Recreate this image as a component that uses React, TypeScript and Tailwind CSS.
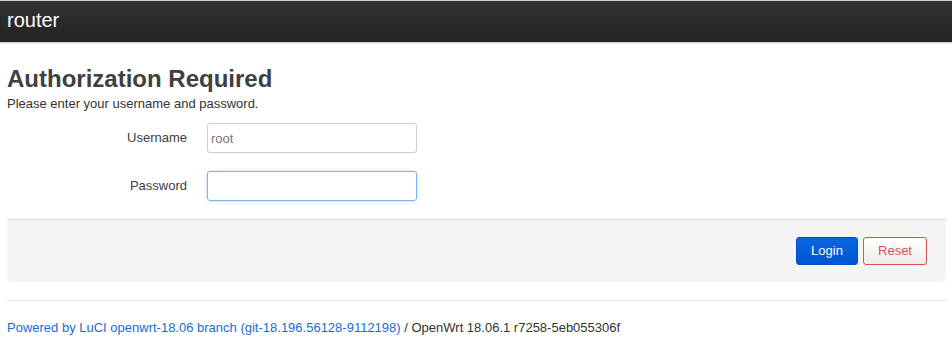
export default function App() {
  return (
    <div className="min-h-[360px] bg-white font-['Liberation_Sans',Arial,sans-serif] text-[#404040]">
      <header className="h-[42px] border-t border-[#d0d0d0] bg-gradient-to-b from-[#333333] to-[#222222] pl-[7px] shadow-[0_1px_2px_rgba(0,0,0,0.25)]">
        <div className="pt-[7px] text-[20px] leading-[24px] text-white">router</div>
      </header>

      <main className="px-[7px] pr-[6px]">
        <h2 className="mt-[22px] text-[24px] font-bold leading-[30px] text-[#404040]">Authorization Required</h2>
        <p className="mt-[1px] text-[13px] leading-[17px] text-[#333]">Please enter your username and password.</p>

        <div className="mt-[11px] space-y-[18px]">
          <div className="flex items-center">
            <label className="w-[180px] text-right text-[13px] text-[#404040]">Username</label>
            <input
              type="text"
              defaultValue="root"
              className="ml-[20px] h-[30px] w-[210px] rounded-[3px] border border-[#ccc] px-[3px] text-[13px] text-[#777] outline-none"
            />
          </div>
          <div className="flex items-center">
            <label className="w-[180px] text-right text-[13px] text-[#404040]">Password</label>
            <input
              type="password"
              className="ml-[20px] h-[30px] w-[210px] rounded-[3px] border border-[#7cb8f0] px-[3px] text-[13px] shadow-[0_0_3px_rgba(82,168,236,0.5)] outline-none"
            />
          </div>
        </div>

        <div className="mt-[18px] flex h-[63px] items-center justify-end rounded-b-[4px] border-t border-[#ddd] bg-[#f4f4f4] pr-[19px]">
          <div className="flex gap-[5px]">
            <button className="h-[28px] w-[62px] rounded-[3px] border border-[#0050c8] bg-gradient-to-b from-[#0a65e0] to-[#0055d4] text-[13px] text-white">
              Login
            </button>
            <button className="h-[28px] w-[64px] rounded-[3px] border border-[#d9534f] bg-gradient-to-b from-white to-[#ececec] text-[13px] text-[#d9534f]">
              Reset
            </button>
          </div>
        </div>

        <div className="mt-[18px] border-t border-[#e5e5e5] pt-[18px] text-[13px] leading-[17px]">
          <a className="text-[#1c6ad4]">Powered by LuCI openwrt-18.06 branch (git-18.196.56128-9112198)</a>
          <span className="text-[#333]"> / OpenWrt 18.06.1 r7258-5eb055306f</span>
        </div>
      </main>
    </div>
  );
}
